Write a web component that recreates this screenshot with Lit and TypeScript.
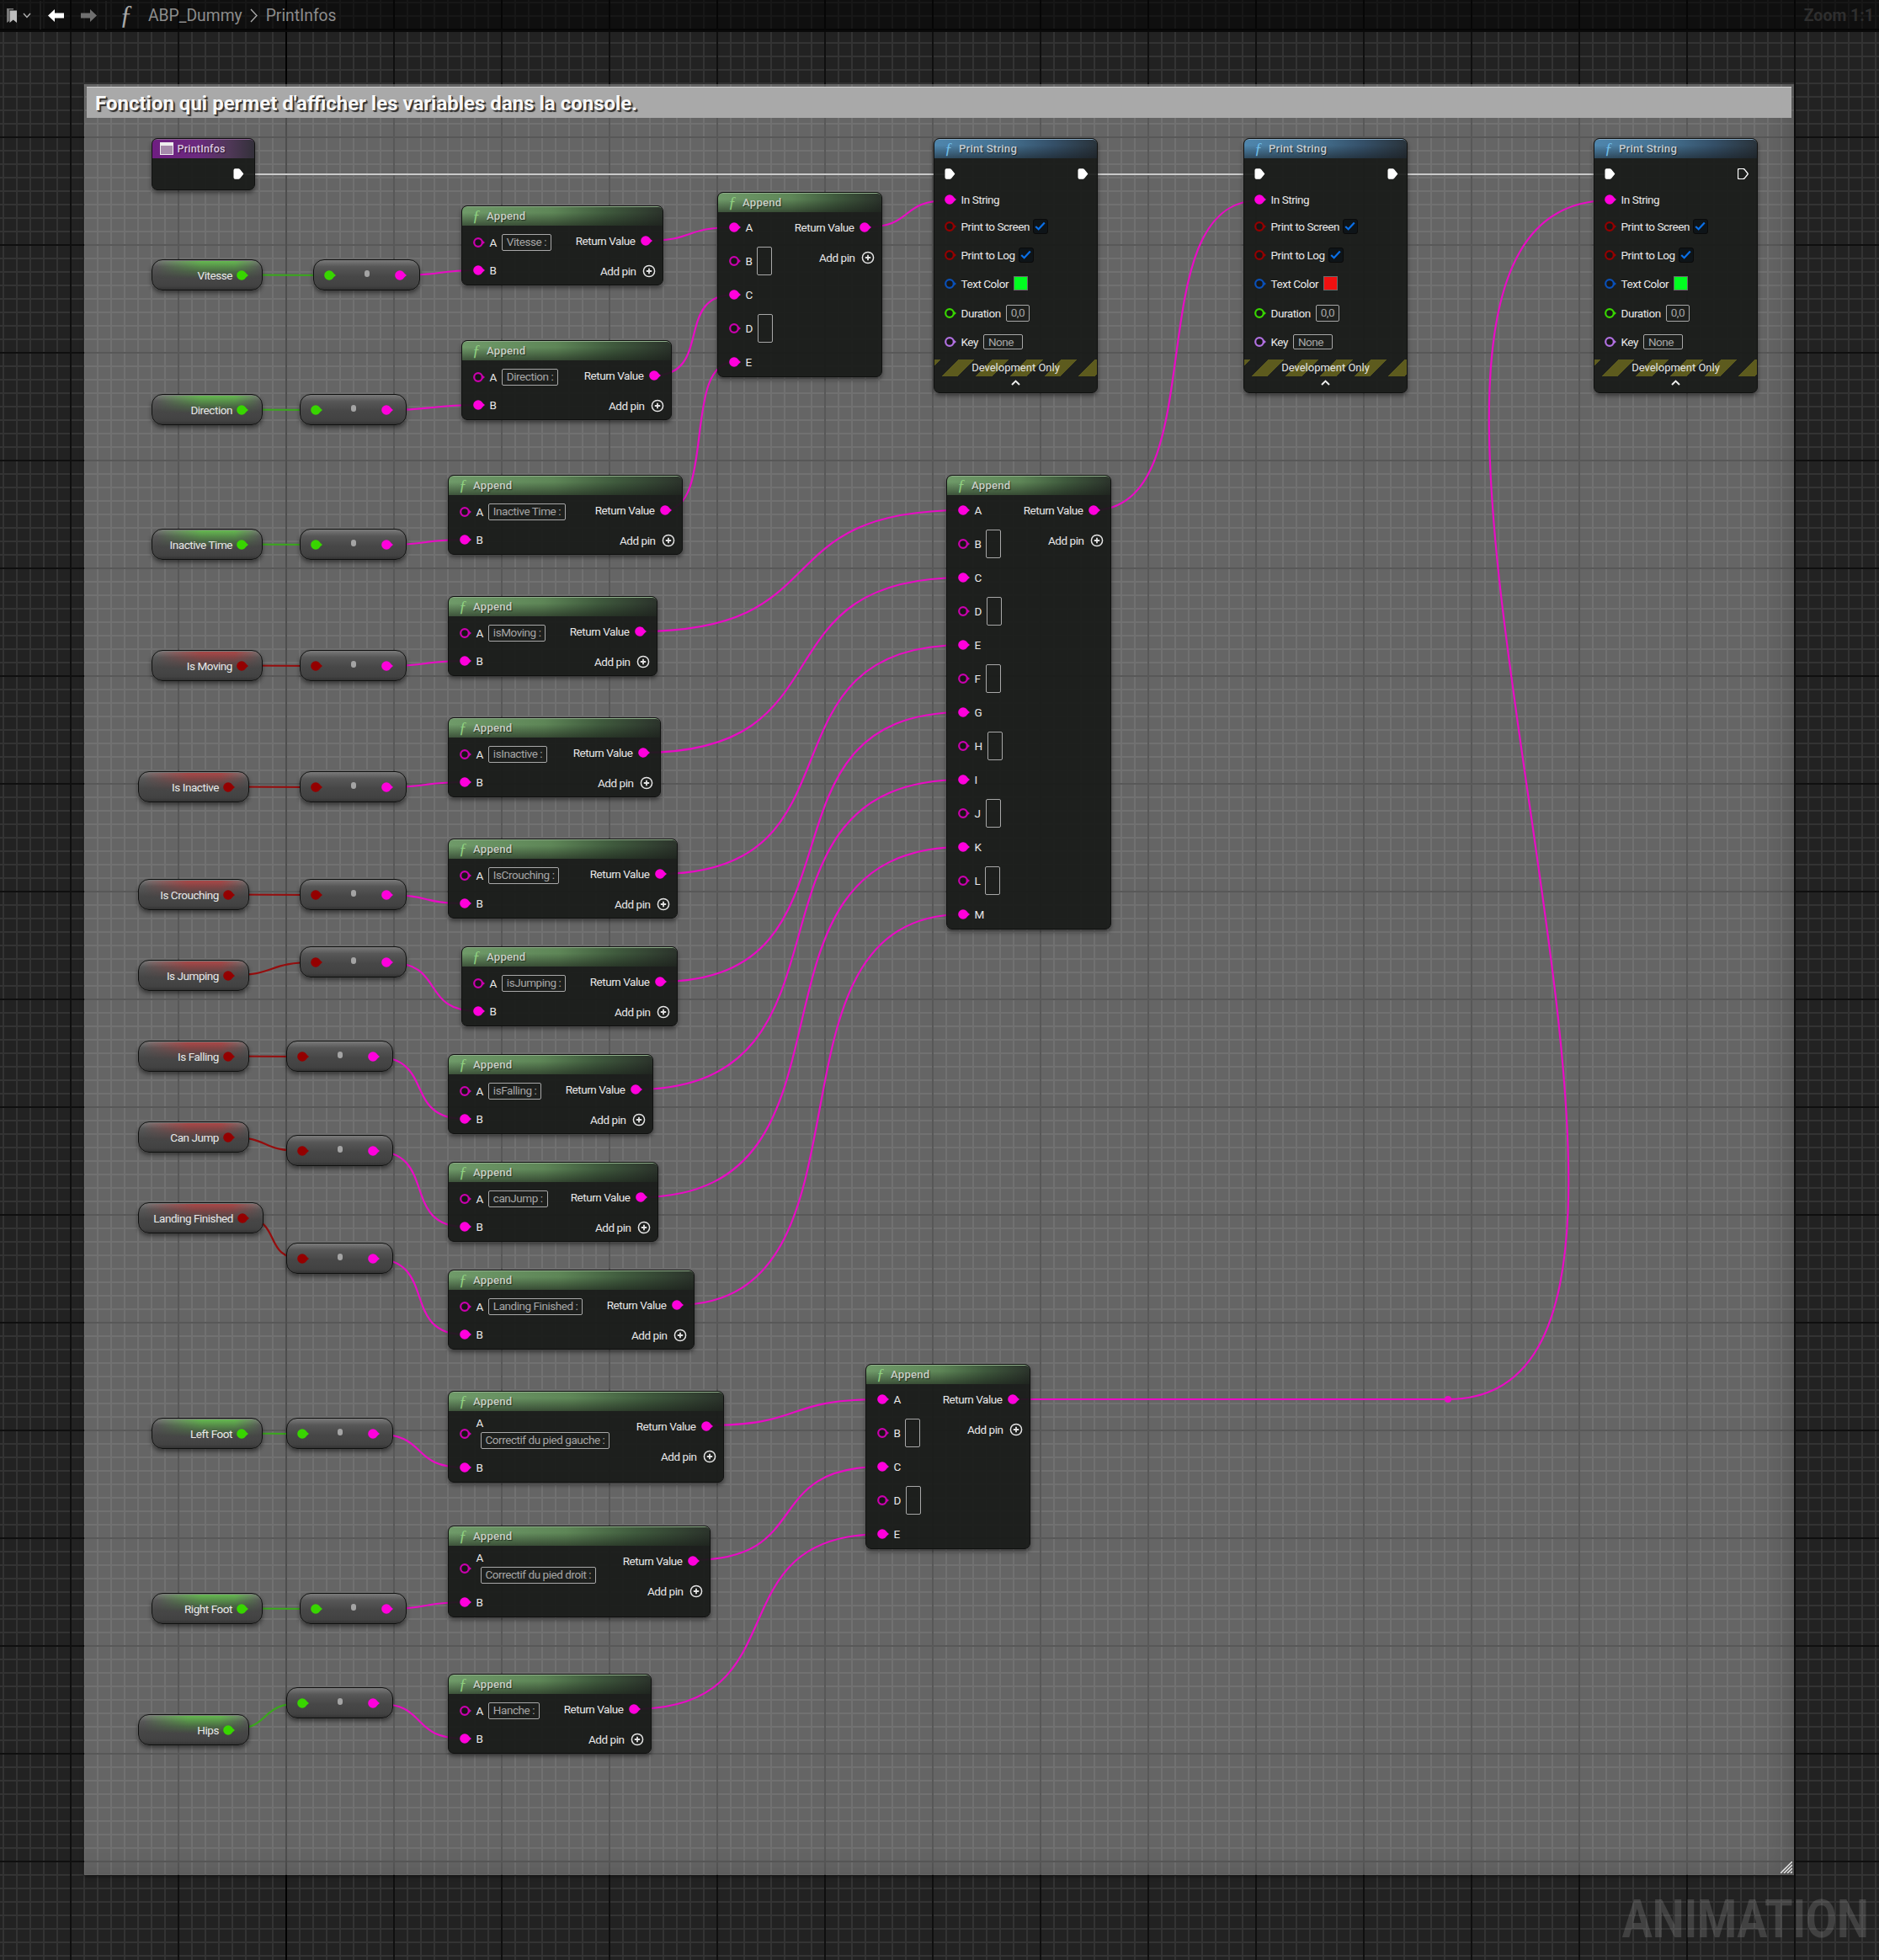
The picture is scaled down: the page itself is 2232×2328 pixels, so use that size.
import { LitElement, html, css, svg } from 'lit';
import { customElement } from 'lit/decorators.js';

const COLORS = {
  str: '#ff00dc',
  strDim: '#c900ad',
  bool: '#940000',
  flt: '#38d500',
  color: '#0a50b8',
  name: '#b070e0',
};

type Kind = 'flt' | 'bool';

// [label, x, y, width, type]
const VARS: [string, number, number, number, Kind][] = [
  ['Vitesse', 180, 308, 132, 'flt'],
  ['Direction', 180, 468, 132, 'flt'],
  ['Inactive Time', 180, 628, 132, 'flt'],
  ['Is Moving', 180, 772, 132, 'bool'],
  ['Is Inactive', 164, 916, 132, 'bool'],
  ['Is Crouching', 164, 1044, 132, 'bool'],
  ['Is Jumping', 164, 1140, 132, 'bool'],
  ['Is Falling', 164, 1236, 132, 'bool'],
  ['Can Jump', 164, 1332, 132, 'bool'],
  ['Landing Finished', 164, 1428, 149, 'bool'],
  ['Left Foot', 180, 1684, 132, 'flt'],
  ['Right Foot', 180, 1892, 132, 'flt'],
  ['Hips', 164, 2036, 132, 'flt'],
];

// conversion node for each var, same order
const CONVS: [number, number][] = [
  [372, 308], [356, 468], [356, 628], [356, 772], [356, 916], [356, 1044], [356, 1124],
  [340, 1236], [340, 1348], [340, 1476], [340, 1684], [356, 1892], [340, 2004],
];

// [x, y, width, A default, long layout]
const APPENDS: [number, number, number, string, boolean][] = [
  [548, 244, 240, 'Vitesse :', false],
  [548, 404, 250, 'Direction :', false],
  [532, 564, 279, 'Inactive Time :', false],
  [532, 708, 249, 'isMoving :', false],
  [532, 852, 253, 'isInactive :', false],
  [532, 996, 273, 'IsCrouching :', false],
  [548, 1124, 257, 'isJumping :', false],
  [532, 1252, 244, 'isFalling :', false],
  [532, 1380, 250, 'canJump :', false],
  [532, 1508, 293, 'Landing Finished :', false],
  [532, 1652, 328, 'Correctif du pied gauche :', true],
  [532, 1812, 312, 'Correctif du pied droit :', true],
  [532, 1988, 242, 'Hanche :', false],
];

// [x, y, pin letters]
const STACKS: [number, number, string][] = [
  [852, 228, 'ABCDE'],
  [1124, 564, 'ABCDEFGHIJKLM'],
  [1028, 1620, 'ABCDE'],
];

// [x, text colour, hollow exec out]
const PRINTS: [number, string, boolean][] = [
  [1109, '#00ff20', false],
  [1477, '#f01010', false],
  [1893, '#00ff20', true],
];

const retPin = (i: number): [number, number] => {
  const [x, y, w, , long] = APPENDS[i];
  return [x + w - 22, y + (long ? 41 : 42)];
};
const bPin = (i: number): [number, number] => {
  const [x, y, , , long] = APPENDS[i];
  return [x + 20, y + (long ? 91 : 77)];
};
const stackPin = (s: number, row: number): [number, number] => [STACKS[s][0] + 20, STACKS[s][1] + 42 + row * 40];
const stackRet = (s: number): [number, number] => [STACKS[s][0] + 174, STACKS[s][1] + 42];

function curve(a: [number, number], b: [number, number], tangent?: number) {
  const dx = Math.abs(b[0] - a[0]);
  const dy = Math.abs(b[1] - a[1]);
  const t = tangent ?? dx * (0.55 + 0.2 * Math.min(1, dy / (dx || 1)));
  return `M${a[0]} ${a[1]} C${a[0] + t} ${a[1]} ${b[0] - t} ${b[1]} ${b[0]} ${b[1]}`;
}

function wires() {
  const out: { d: string; color: string }[] = [];
  const mag = '#e80cc4';
  VARS.forEach((v, i) => {
    const [, x, y, w, kind] = v;
    const [cx, cy] = CONVS[i];
    out.push({
      d: curve([x + w - 25, y + 18.5], [cx + 19, cy + 19]),
      color: kind === 'flt' ? '#3aa81c' : '#950d0d',
    });
    out.push({ d: curve([cx + 104, cy + 19], bPin(i)), color: mag });
  });
  // first three appends feed the small stack
  [0, 1, 2].forEach((a, n) => out.push({ d: curve(retPin(a), stackPin(0, n * 2)), color: mag }));
  // the next seven feed the big one
  [3, 4, 5, 6, 7, 8, 9].forEach((a, n) => out.push({ d: curve(retPin(a), stackPin(1, n * 2)), color: mag }));
  // feet and hips feed the last stack
  [10, 11, 12].forEach((a, n) => out.push({ d: curve(retPin(a), stackPin(2, n * 2)), color: mag }));
  out.push({ d: curve(stackRet(0), [PRINTS[0][0] + 19, 238]), color: mag });
  out.push({ d: curve(stackRet(1), [PRINTS[1][0] + 19, 238]), color: mag });
  out.push({ d: `M${stackRet(2)[0]} ${stackRet(2)[1]} L1720 1662`, color: mag });
  out.push({ d: curve([1720, 1662], [PRINTS[2][0] + 19, 238], 400), color: mag });
  return out;
}

const pin = (color: string, filled = true) => html`
  <svg class="pin" width="14" height="12" viewBox="0 0 14 12">
    <path d="M11 3.5 L14 6 L11 8.5Z" fill=${color}></path>
    ${filled
      ? svg`<circle cx="6" cy="6" r="5.8" fill=${color}></circle>`
      : svg`<circle cx="6" cy="6" r="4.8" fill="#161616" stroke=${color} stroke-width="2.2"></circle>`}
  </svg>
`;

const exec = (hollow = false) => html`
  <svg class="exec" width="13" height="13" viewBox="-.5 0 13.5 13">
    <path
      d="M2 0 H6 Q7 0 8 1 L12 6 Q12.5 6.5 12 7 L8 12 Q7 13 6 13 H2 Q0 13 0 11 V2 Q0 0 2 0Z"
      fill=${hollow ? 'none' : '#fff'}
      stroke=${hollow ? '#fff' : 'none'}
      stroke-width="1.4"
    ></path>
  </svg>
`;

const addPin = html`
  <svg class="plus" width="16" height="16" viewBox="0 0 16 16">
    <circle cx="8" cy="8" r="6.6" fill="none" stroke="#e4e4e4" stroke-width="1.5"></circle>
    <path d="M8 4.8 V11.2 M4.8 8 H11.2" stroke="#e4e4e4" stroke-width="1.8"></path>
  </svg>
`;

const check = html`
  <span class="check">
    <svg width="13" height="11" viewBox="0 0 13 11">
      <path d="M1.2 6 L4.6 9.2 L11.8 1.4" fill="none" stroke="#0a70e8" stroke-width="2.2"></path>
    </svg>
  </span>
`;

@customElement('app-root')
export class AppRoot extends LitElement {
  static override styles = css`
    :host {
      display: block;
      position: relative;
      width: 2232px;
      height: 2328px;
      overflow: hidden;
      font-family: Roboto, 'Liberation Sans', sans-serif;
      color: #e8e8e8;
      background-color: #222;
      background-image:
        linear-gradient(90deg, #000 2px, transparent 2px),
        linear-gradient(90deg, #0f0f0f 2px, transparent 2px),
        linear-gradient(180deg, #0f0f0f 2px, transparent 2px),
        linear-gradient(90deg, #333 2px, transparent 2px),
        linear-gradient(180deg, #333 2px, transparent 2px);
      background-size: 100% 100%, 128px 100%, 100% 128px, 16px 100%, 100% 16px;
      background-position: 339px 0, 83px 0, 0 34px, 3px 0, 0 2px;
      background-repeat: no-repeat, repeat-x, repeat-y, repeat-x, repeat-y;
    }

    .toolbar {
      position: absolute;
      inset: 0 0 auto 0;
      height: 36px;
      display: flex;
      align-items: center;
      padding-left: 8px;
      background: rgba(0, 0, 0, 0.55);
      border-bottom: 2px solid #0a0a0a;
      color: #8c8c8c;
      font-size: 19.3px;
    }
    .toolbar svg { display: block; flex: none; }
    .sep { width: 2px; height: 34px; background: #1d1d1d; flex: none; }
    .fx {
      font-family: 'Liberation Serif', serif;
      font-style: italic;
      font-size: 31px;
      line-height: 34px;
      color: #a8a8a8;
      width: 34px;
      margin-left: 15px;
    }
    .crumb-sep { margin: 0 10px 0 9px; }
    .zoom {
      margin-left: auto;
      margin-right: 6px;
      font-weight: 700;
      font-size: 19.5px;
      color: #2e2e2e;
    }

    .comment {
      position: absolute;
      left: 100px;
      top: 100px;
      width: 2031px;
      height: 2127px;
      background: rgba(255, 255, 255, 0.305);
      box-shadow: 0 2px 4px rgba(0, 0, 0, 0.5), inset -30px -20px 40px -24px rgba(0, 0, 0, 0.18);
      padding: 3px;
      box-sizing: border-box;
    }
    .comment-title {
      height: 37px;
      padding: 2px 0 0 10px;
      display: flex;
      align-items: center;
      background: #a9a9a9;
      border-top: 1px solid #d0d0d0;
      box-sizing: border-box;
      color: #f8f8f8;
      font-weight: 700;
      font-size: 24px;
      text-shadow: 1px 1px 0 #333, 2px 2px 1px #2a2a2a;
    }
    .grip { position: absolute; right: 2px; bottom: 2px; }

    .wires { position: absolute; left: 0; top: 0; pointer-events: none; }
    .wires path { fill: none; stroke-width: 2.2; }

    .node {
      position: absolute;
      box-sizing: border-box;
      border: 1.5px solid #101110;
      border-radius: 7px;
      background: rgba(24, 26, 24, 0.93);
      box-shadow: 0 3px 5px rgba(0, 0, 0, 0.45);
      font-size: 13.5px;
      letter-spacing: -0.45px;
      overflow: hidden;
    }
    .header {
      box-sizing: border-box;
      height: 22.5px;
      display: flex;
      align-items: center;
      padding-left: 12px;
      gap: 7px;
      font-weight: 500;
      font-size: 13.2px;
      letter-spacing: 0.2px;
      color: #c8d0c6;
      text-shadow: 1px 1px 1px rgba(0, 0, 0, 0.55);
      border-top: 1px solid #8fae8a;
      border-radius: 5px 5px 0 0;
      background:
        linear-gradient(180deg, transparent 30%, rgba(22, 26, 22, 0.55) 100%),
        linear-gradient(90deg, #6f9a69 0%, #5e8657 45%, #3f5a3d 72%, #2b332b 100%);
    }
    .header.blue {
      color: #c4ccd2;
      border-top-color: #86a6bf;
      background:
        linear-gradient(180deg, transparent 30%, rgba(22, 26, 30, 0.55) 100%),
        linear-gradient(90deg, #4f86ad 0%, #44708f 45%, #35516a 72%, #29333b 100%);
    }
    .header.purple {
      color: #dcc8e0;
      font-size: 12.5px;
      padding-left: 8.5px;
      gap: 5px;
      border-top-color: #8a6090;
      background: linear-gradient(90deg, #6f1e82 0%, #6b2a7e 45%, #503858 75%, #33303a 100%);
    }
    .f {
      font-family: 'Liberation Serif', serif;
      font-style: italic;
      font-size: 19px;
      letter-spacing: 0;
      color: #8fd080;
      text-shadow: none;
      width: 10px;
    }
    .blue .f { color: #6fbde8; }
    .fn-icon {
      width: 16px;
      height: 15px;
      box-sizing: border-box;
      border: 1.5px solid #eee;
      border-top-width: 4px;
      background: #a58aaa;
    }

    .body { display: flex; justify-content: space-between; }
    .col { display: flex; flex-direction: column; }
    .col.left { padding-left: 12.5px; padding-top: 4px; }
    .col.right { align-items: flex-end; padding-right: 12.5px; padding-top: 4px; }
    .row { display: flex; align-items: center; gap: 4px; white-space: nowrap; }
    .row .pin { margin-right: 2px; flex: none; }
    .h28 { height: 28px; }
    .h32 { height: 32px; }
    .h34 { height: 34px; }
    .h46 { height: 46px; }
    .add { height: 28px; margin-top: 8px; gap: 7px; }
    .plus { margin-right: -4px; }
    .ret { gap: 6px; }
    .ret .pin { margin-right: 0; }

    .input {
      border: 1px solid #a8a8a8;
      border-radius: 2px;
      color: #a6a6a6;
      height: 18px;
      line-height: 17px;
      padding: 0 5px;
      margin-left: 2px;
      font-size: 13.5px;
    }
    .a-long { display: flex; flex-direction: column; gap: 3px; padding-bottom: 1px; }
    .a-long .input { margin-left: 5px; align-self: flex-start; }
    .a-long .lbl { margin-top: -1px; }

    .stack .col.left { padding-top: 0; }
    .stack .s-fill { height: 36px; }
    .stack .s-empty { height: 44px; }
    .slot {
      width: 18px;
      height: 34px;
      margin-left: 2px;
      box-sizing: border-box;
      border: 1px solid #a8a8a8;
      border-radius: 2px;
    }

    .print .rows { padding: 5px 0 0 11.5px; }
    .print .exec-row { display: flex; justify-content: space-between; align-items: center; padding-right: 10.5px; }
    .check {
      display: inline-flex;
      align-items: center;
      justify-content: center;
      width: 18px;
      height: 18px;
      box-sizing: border-box;
      border-radius: 3px;
      border: 1px solid #0a0a0a;
      background: #0e1418;
    }
    .swatch {
      width: 17px;
      height: 17px;
      margin-left: 2px;
      box-sizing: border-box;
      border: 1px solid #6a6a6a;
    }
    .value { min-width: 10px; margin-left: 2px; }
    .key { width: 47px; box-sizing: border-box; }
    .dev {
      margin-top: 6px;
      height: 20px;
      display: flex;
      align-items: center;
      justify-content: center;
      color: #e4e4e4;
      font-size: 13px;
      letter-spacing: 0;
      background: repeating-linear-gradient(135deg, #5d5b1e 0 4.95px, transparent 4.95px 19.8px, #5d5b1e 19.8px 28.8px);
    }
    .chev { display: flex; justify-content: center; margin-top: 4px; }

    .pill {
      position: absolute;
      height: 37px;
      box-sizing: border-box;
      border: 1.5px solid #101110;
      border-radius: 13px;
      background:
        linear-gradient(180deg, #7a7a7a 0, #575757 22%, #474747 55%, #424242 88%, #333 100%);
      box-shadow: 0 3px 5px rgba(0, 0, 0, 0.45);
      display: flex;
      align-items: center;
      overflow: hidden;
    }
    .var {
      justify-content: flex-end;
      gap: 5px;
      padding-right: 16px;
      font-size: 13.5px;
      letter-spacing: -0.45px;
    }
    .var::before {
      content: '';
      position: absolute;
      inset: 1px 0 0 0;
      height: 60%;
      -webkit-mask-image: linear-gradient(90deg, transparent 4%, #000 45%, #000 75%, transparent 100%);
      mask-image: linear-gradient(90deg, transparent 4%, #000 45%, #000 75%, transparent 100%);
    }
    .var.flt::before { background: linear-gradient(180deg, rgba(96, 200, 70, 0.8), rgba(70, 140, 55, 0.45) 60%, transparent); }
    .var.bool::before { background: linear-gradient(180deg, rgba(190, 50, 50, 0.7), rgba(150, 50, 50, 0.3) 60%, transparent); }
    .var span, .var svg { position: relative; }
    .conv { justify-content: space-between; padding: 0 15px 0 12px; }
    .dot { width: 6px; height: 8px; border-radius: 3px; background: #a4a4a4; margin: 0 0 4px 3px; }

    .knot { position: absolute; left: 1716px; top: 1658px; width: 8px; height: 8px; border-radius: 50%; background: #e80cc4; }

    .watermark {
      position: absolute;
      right: 12px;
      top: 2245px;
      font-weight: 700;
      font-size: 63px;
      line-height: 70px;
      color: rgba(255, 255, 255, 0.14);
      transform: scaleX(0.85);
      transform-origin: right center;
    }
  `;

  private appendNode([x, y, w, label, long]: (typeof APPENDS)[number]) {
    return html`
      <div class="node" style="left:${x}px;top:${y}px;width:${w}px;height:${long ? 109 : 95}px">
        <div class="header"><span class="f">ƒ</span>Append</div>
        <div class="body">
          <div class="col left">
            ${long
              ? html`<div class="row h46">
                  ${pin(COLORS.strDim, false)}
                  <div class="a-long">
                    <span class="lbl">A</span>
                    <span class="input">${label}</span>
                  </div>
                </div>`
              : html`<div class="row h32">${pin(COLORS.strDim, false)}<span>A</span><span class="input">${label}</span></div>`}
            <div class="row h34">${pin(COLORS.str)}<span>B</span></div>
          </div>
          <div class="col right">
            <div class="row ret h28">Return Value ${pin(COLORS.str)}</div>
            <div class="row add">Add pin ${addPin}</div>
          </div>
        </div>
      </div>
    `;
  }

  private stackNode([x, y, letters]: (typeof STACKS)[number]) {
    const rows = letters.split('');
    return html`
      <div class="node stack" style="left:${x}px;top:${y}px;width:196px;height:${rows.length * 40 + 20}px">
        <div class="header"><span class="f">ƒ</span>Append</div>
        <div class="body">
          <div class="col left">
            ${rows.map((l, i) =>
              i % 2 === 0
                ? html`<div class="row s-fill">${pin(COLORS.str)}<span>${l}</span></div>`
                : html`<div class="row s-empty">${pin(COLORS.strDim, false)}<span>${l}</span><span class="slot"></span></div>`
            )}
          </div>
          <div class="col right">
            <div class="row ret h28">Return Value ${pin(COLORS.str)}</div>
            <div class="row add">Add pin ${addPin}</div>
          </div>
        </div>
      </div>
    `;
  }

  private printNode([x, textColor, hollow]: (typeof PRINTS)[number]) {
    const h = (n: number) => `height:${n}px`;
    return html`
      <div class="node print" style="left:${x}px;top:164px;width:195px;height:303px">
        <div class="header blue"><span class="f">ƒ</span>Print String</div>
        <div class="rows">
          <div class="exec-row" style=${h(28)}>${exec()}${exec(hollow)}</div>
          <div class="row" style=${h(32)}>${pin(COLORS.str)}<span>In String</span></div>
          <div class="row" style=${h(32)}>${pin(COLORS.bool, false)}<span>Print to Screen</span>${check}</div>
          <div class="row" style=${h(36)}>${pin(COLORS.bool, false)}<span>Print to Log</span>${check}</div>
          <div class="row" style=${h(32)}>
            ${pin(COLORS.color, false)}<span>Text Color</span><span class="swatch" style="background:${textColor}"></span>
          </div>
          <div class="row" style=${h(38)}>${pin(COLORS.flt, false)}<span>Duration</span><span class="input value">0,0</span></div>
          <div class="row" style=${h(30)}>${pin(COLORS.name, false)}<span>Key</span><span class="input key">None</span></div>
        </div>
        <div class="dev">Development Only</div>
        <div class="chev">
          <svg width="11" height="7" viewBox="0 0 11 7"><path d="M1 6 L5.5 1.6 L10 6" fill="none" stroke="#eee" stroke-width="2"></path></svg>
        </div>
      </div>
    `;
  }

  override render() {
    return html`
      <div class="comment">
        <div class="comment-title">Fonction qui permet d'afficher les variables dans la console.</div>
        <svg class="grip" width="14" height="14" viewBox="0 0 14 14">
          <path d="M0 14 L14 0 M4 14 L14 4 M8 14 L14 8 M12 14 L14 12" stroke="#eee" stroke-width="1.4"></path>
        </svg>
      </div>

      <svg class="wires" width="2232" height="2328">
        ${wires().map((w) => svg`<path d=${w.d} stroke=${w.color}></path>`)}
        <path d="M290 207 H1124 M1292 207 H1491 M1660 207 H1907" stroke="#c9c9c9"></path>
      </svg>
      <div class="knot"></div>

      <div class="node" style="left:180px;top:164px;width:123px;height:62px">
        <div class="header purple"><span class="fn-icon"></span>PrintInfos</div>
        <div class="body" style="justify-content:flex-end;padding:12.5px 12.5px 0 0">${exec()}</div>
      </div>

      ${VARS.map(
        ([label, x, y, w, kind]) => html`
          <div class="pill var ${kind}" style="left:${x}px;top:${y}px;width:${w}px">
            <span>${label}</span>${pin(kind === 'flt' ? COLORS.flt : COLORS.bool)}
          </div>
        `
      )}
      ${CONVS.map(
        ([x, y], i) => html`
          <div class="pill conv" style="left:${x}px;top:${y}px;width:127px">
            ${pin(VARS[i][4] === 'flt' ? COLORS.flt : COLORS.bool)}
            <span class="dot"></span>
            ${pin(COLORS.str)}
          </div>
        `
      )}
      ${APPENDS.map((a) => this.appendNode(a))}
      ${STACKS.map((s) => this.stackNode(s))}
      ${PRINTS.map((p) => this.printNode(p))}

      <div class="watermark">ANIMATION</div>

      <div class="toolbar">
        <svg width="12" height="17" viewBox="0 0 12 17">
          <path d="M0 0 H8 V1.5 H3 V15 L0 17Z" fill="#777"></path>
          <path d="M3.5 2.5 H12 V17 L7.7 13.6 L3.5 17Z" fill="#bdbdbd"></path>
        </svg>
        <svg style="margin:0 10px 0 7px" width="10" height="7" viewBox="0 0 10 7">
          <path d="M1 1 L5 5.4 L9 1" fill="none" stroke="#b0b0b0" stroke-width="1.4"></path>
        </svg>
        <span class="sep"></span>
        <svg style="margin:0 20px 0 8px" width="19" height="15" viewBox="0 0 19 15">
          <path d="M0 7.5 L8 0 V4.5 H19 V10.5 H8 V15Z" fill="#fff"></path>
        </svg>
        <svg style="margin-right:10px" width="19" height="15" viewBox="0 0 19 15">
          <path d="M19 7.5 L11 0 V4.5 H0 V10.5 H11 V15Z" fill="#6f6f6f"></path>
        </svg>
        <span class="sep"></span>
        <span class="fx">ƒ</span>
        <span>ABP_Dummy</span>
        <svg class="crumb-sep" width="9" height="17" viewBox="0 0 9 17">
          <path d="M1 1 L8 8.5 L1 16" fill="none" stroke="#a8a8a8" stroke-width="1.4"></path>
        </svg>
        <span>PrintInfos</span>
        <span class="zoom">Zoom 1:1</span>
      </div>
    `;
  }
}
